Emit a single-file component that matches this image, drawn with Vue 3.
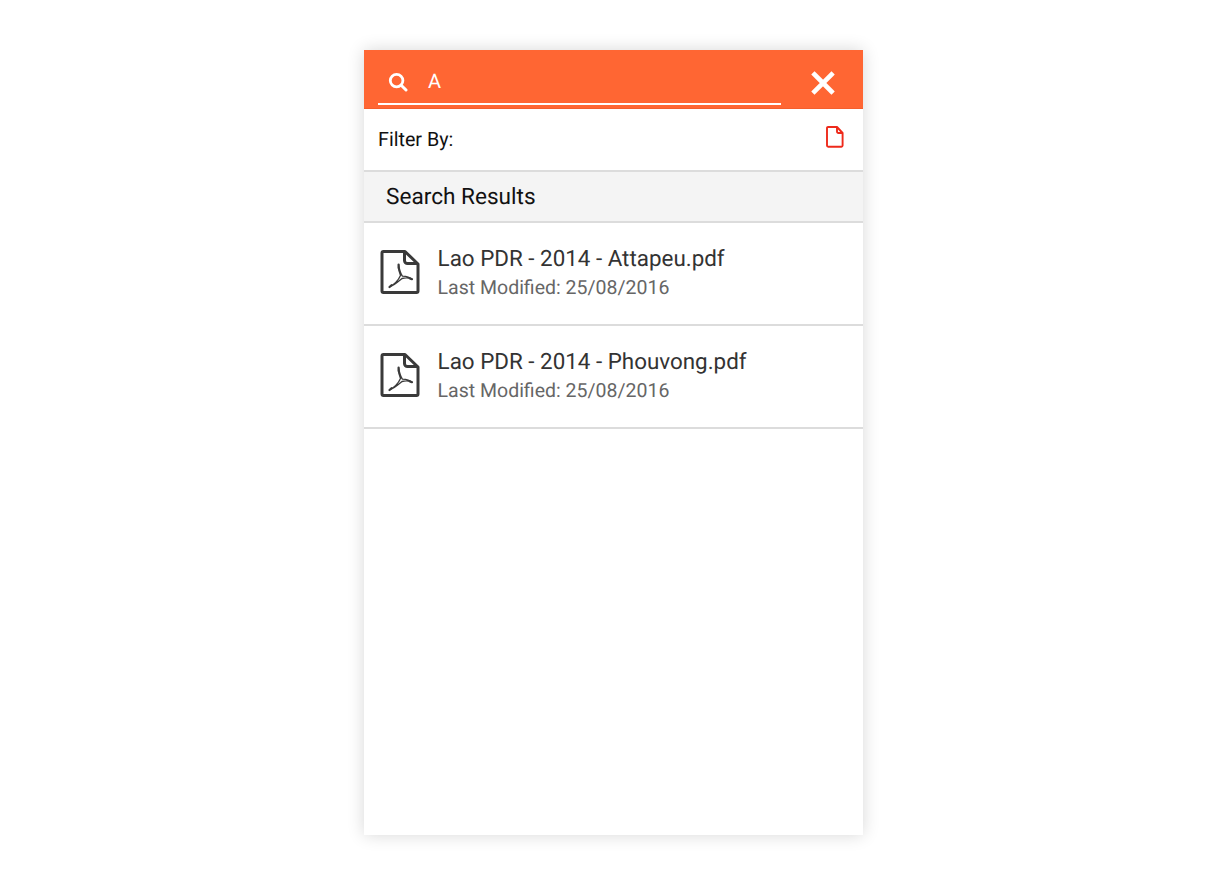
<script setup>
const results = [
  { name: 'Lao PDR - 2014 - Attapeu.pdf', modified: '25/08/2016' },
  { name: 'Lao PDR - 2014 - Phouvong.pdf', modified: '25/08/2016' },
]
</script>

<template>
  <div class="page">
    <div class="panel">
      <header class="search-bar">
        <div class="search-field">
          <svg class="search-icon" width="20" height="20" viewBox="0 0 20 20">
            <circle cx="8.6" cy="8.6" r="6.3" fill="none" stroke="#fff" stroke-width="2.8" />
            <path d="M13.2 13.2L18 18" stroke="#fff" stroke-width="3" stroke-linecap="round" />
          </svg>
          <span class="query">A</span>
        </div>
        <svg class="close-icon" width="24" height="24" viewBox="0 0 24 24">
          <path d="M3.5 3.5L20.5 20.5M20.5 3.5L3.5 20.5" stroke="#fff" stroke-width="4.6" stroke-linecap="square" />
        </svg>
      </header>

      <div class="filter-row">
        <span>Filter By:</span>
        <svg class="filter-icon" width="18" height="22" viewBox="0 0 18 22">
          <path d="M2 1H11L16.6 7V19.6A1.2 1.2 0 0 1 15.4 20.8H2.2A1.2 1.2 0 0 1 1 19.6V2A1 1 0 0 1 2 1Z" fill="none" stroke="#ee2a1b" stroke-width="1.9" stroke-linejoin="round" />
          <path d="M11 1V5.6A1.4 1.4 0 0 0 12.4 7H16.6" fill="none" stroke="#ee2a1b" stroke-width="1.9" />
        </svg>
      </div>

      <div class="section-title">Search Results</div>

      <ul class="results">
        <li v-for="item in results" :key="item.name" class="result">
          <svg class="pdf-icon" width="40" height="46" viewBox="0 0 40 46">
            <path d="M3.5 2.5H25L38 15V42A1.5 1.5 0 0 1 36.5 43.5H3.5A1.5 1.5 0 0 1 2 42V4A1.5 1.5 0 0 1 3.5 2.5Z" fill="none" stroke="#3a3a3a" stroke-width="3" stroke-linejoin="round" />
            <path d="M24.5 3V11.5A3 3 0 0 0 27.5 14.5H37.5" fill="none" stroke="#3a3a3a" stroke-width="3" />
            <path d="M18.6 16C18 20 18.8 23 20.5 26.5C18.5 31 14 35.5 9.5 38C14.5 36 18.5 32.5 22 29.5C25.5 28.6 29 28.8 32 30.2C29 27.6 25.5 27.4 22.4 27.2C20 23.5 19.4 20 18.6 16Z" fill="none" stroke="#3a3a3a" stroke-width="1.3" stroke-linejoin="round" />
            <path d="M18.6 15.5V19M9.5 38L11.5 36.2M32 30.2L29.5 29.2" stroke="#3a3a3a" stroke-width="2.2" stroke-linecap="round" />
          </svg>
          <div class="result-text">
            <div class="result-name">{{ item.name }}</div>
            <div class="result-meta">Last Modified: {{ item.modified }}</div>
          </div>
        </li>
      </ul>
    </div>
  </div>
</template>

<style>
html, body { margin: 0; background: #fff; }
</style>

<style scoped>
.page {
  display: flex;
  justify-content: center;
  height: 896px;
  padding: 50px 3px 0 0;
  box-sizing: border-box;
  font-family: Roboto, "Liberation Sans", sans-serif;
  text-rendering: geometricPrecision;
}
.panel {
  width: 499px;
  height: 785px;
  background: #fff;
  box-shadow: 0 0 16px rgba(0, 0, 0, 0.16);
}
.search-bar {
  display: flex;
  align-items: flex-start;
  height: 59px;
  box-sizing: border-box;
  background: #ff6633;
  border-bottom: 1px solid #f45f2d;
  padding-left: 14px;
}
.search-field {
  display: flex;
  align-items: center;
  width: 403px;
  height: 55px;
  box-sizing: border-box;
  border-bottom: 2px solid #fff;
  padding: 10px 0 0 10px;
}
.search-icon { display: block; }
.query {
  margin: -1px 0 0 20px;
  color: #fff;
  font-size: 20px;
}
.close-icon {
  display: block;
  margin: 21px 0 0 30px;
}
.filter-row {
  display: flex;
  justify-content: space-between;
  align-items: flex-start;
  height: 63px;
  box-sizing: border-box;
  padding: 18px 19px 0 14px;
  color: #111;
  font-size: 19.7px;
  line-height: 26px;
  border-bottom: 2px solid #dcdcdc;
}
.filter-icon { display: block; margin-top: -1px; }
.section-title {
  height: 51px;
  box-sizing: border-box;
  padding-left: 22px;
  background: #f4f4f4;
  border-bottom: 2px solid #dcdcdc;
  color: #111;
  font-size: 22.6px;
  line-height: 49px;
}
.results {
  list-style: none;
  margin: 0;
  padding: 0;
}
.result {
  display: flex;
  align-items: flex-start;
  height: 103px;
  box-sizing: border-box;
  padding: 26px 0 0 16px;
  border-bottom: 2px solid #dcdcdc;
}
.pdf-icon { display: block; flex: none; }
.result-text { margin: -5px 0 0 17.6px; }
.result-name {
  color: #333;
  font-size: 22.4px;
  line-height: 30px;
}
.result-meta {
  color: #666;
  font-size: 19.5px;
  line-height: 28px;
}
</style>
